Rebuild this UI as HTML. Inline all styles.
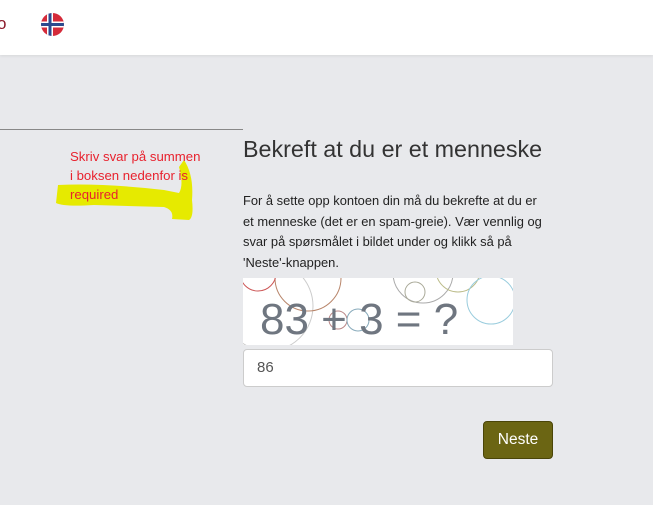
<html><head><style>
body{margin:0;width:653px;height:505px;background:#e8e9ec;font-family:"Liberation Sans",sans-serif;position:relative;overflow:hidden}
.hdr{position:absolute;left:0;top:0;width:653px;height:55px;background:#fff;box-shadow:0 1px 3px rgba(0,0,0,.08)}
.a{position:absolute}
</style></head><body>
<div class="hdr"></div>
<div class="a" style="left:-3px;top:14px;font-size:17px;color:#8b1a2a">o</div>
<svg class="a" style="left:40px;top:12px" width="25" height="25" viewBox="0 0 25 25"><defs><clipPath id="c"><circle cx="12.5" cy="12.5" r="11.5"/></clipPath></defs><g clip-path="url(#c)"><rect width="25" height="25" fill="#d52b3a"/><rect x="7" width="6" height="25" fill="#fff"/><rect y="9.5" width="25" height="6" fill="#fff"/><rect x="8.5" width="3" height="25" fill="#2b4a8e"/><rect y="11" width="25" height="3" fill="#2b4a8e"/></g></svg>
<div class="a" style="left:0;top:129px;width:243px;height:1px;background:#888"></div>
<svg class="a" style="left:54px;top:155px" width="150" height="70"><path d="M4 30 Q50 28 110 35 L125 38 Q130 30 125 12 L130 5 Q140 20 138 45 Q140 62 135 65 L118 64 Q120 55 110 52 L40 50 Q10 52 2 48 Z" fill="#e6ea00"/></svg>
<div class="a" style="left:70px;top:147px;font-size:13.2px;line-height:19px;color:#e8222e">Skriv svar på summen<br>i boksen nedenfor is<br>required</div>
<div class="a" style="left:243px;top:136px;font-size:23.3px;color:#333">Bekreft at du er et menneske</div>
<div class="a" style="left:243px;top:191px;width:302px;font-size:12.9px;line-height:20.5px;color:#222">For å sette opp kontoen din må du bekrefte at du er et menneske (det er en spam-greie). Vær vennlig og svar på spørsmålet i bildet under og klikk så på 'Neste'-knappen.</div>
<svg class="a" style="left:243px;top:278px" width="270" height="67"><rect width="270" height="67" fill="#fff"/><g fill="none" stroke-width="1"><circle cx="25" cy="28" r="45" stroke="#ccc"/><circle cx="65" cy="0" r="33" stroke="#b8856a"/><circle cx="15" cy="-5" r="18" stroke="#c55"/><circle cx="180" cy="-5" r="30" stroke="#aaa"/><circle cx="172" cy="14" r="10" stroke="#aa9"/><circle cx="215" cy="-8" r="22" stroke="#bb8"/><circle cx="248" cy="22" r="24" stroke="#9cd"/><circle cx="95" cy="42" r="9" stroke="#b88"/><circle cx="115" cy="42" r="11" stroke="#8ab"/></g><text x="17" y="56" font-family="Liberation Sans" font-size="44" fill="#6f7680">83 + 3 = ?</text></svg>
<div class="a" style="left:243px;top:349px;width:308px;height:36px;background:#fff;border:1px solid #ccc;border-radius:4px"></div>
<div class="a" style="left:257px;top:359px;font-size:15px;color:#555">86</div>
<div class="a" style="left:483px;top:421px;width:68px;height:36px;background:#6b6513;border:1px solid #4a4508;border-radius:4px;color:#fff;font-size:15.5px;line-height:36px;text-align:center">Neste</div>
</body></html>
